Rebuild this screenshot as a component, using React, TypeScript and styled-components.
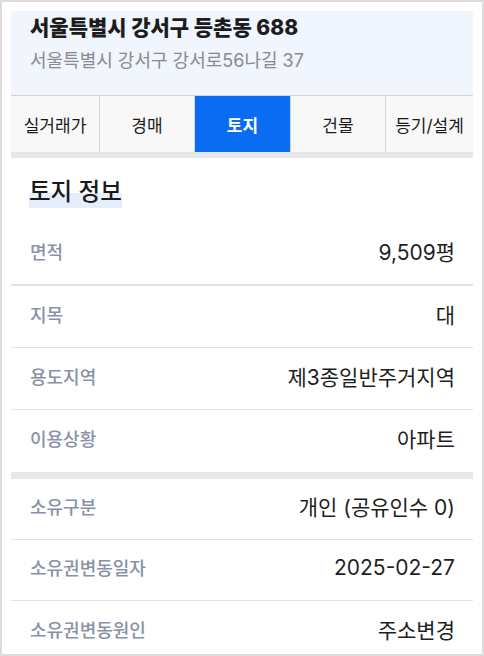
import styled, { createGlobalStyle } from "styled-components";

const GlobalStyle = createGlobalStyle`
  * {
    box-sizing: border-box;
  }
  html, body {
    margin: 0;
    padding: 0;
    background: #ffffff;
  }
  body {
    font-family: "Inter", "Noto Sans CJK KR", "Noto Sans", sans-serif;
    color: #222222;
  }
`;

const Frame = styled.div`
  width: 484px;
  height: 656px;
  border: 2px solid #dcdcdc;
  padding: 9px 9px 0 9px;
  overflow: hidden;
  background: #ffffff;
`;

const Card = styled.div`
  width: 462px;
  display: flex;
  flex-direction: column;
`;

const Header = styled.div`
  height: 84px;
  background: #f0f5fe;
  padding: 2px 19px 0 19px;
  display: flex;
  flex-direction: column;
`;

const Address = styled.h1`
  margin: 0;
  font-size: 21px;
  font-weight: 800;
  line-height: 30px;
  color: #1c1c1c;
`;

const RoadAddress = styled.p`
  margin: 5px 0 0;
  font-size: 18px;
  line-height: 26px;
  color: #8a8a8a;
`;

const Tabs = styled.nav`
  display: grid;
  grid-template-columns: 89px 95px 96px 95px 1fr;
  height: 57px;
  border-top: 1px solid #d4d4d4;
  background: #f8f8f8;
`;

const Tab = styled.div<{ active?: boolean }>`
  display: flex;
  align-items: center;
  justify-content: center;
  font-size: 17px;
  font-weight: ${(p) => (p.active ? 700 : 400)};
  color: ${(p) => (p.active ? "#ffffff" : "#1a1a1a")};
  background: ${(p) => (p.active ? "#0a6cf0" : "transparent")};
  border-right: 1px solid #d4d4d4;
  white-space: nowrap;

  &:last-child {
    border-right: none;
  }
`;

const Band = styled.div<{ size: number }>`
  height: ${(p) => p.size}px;
  background: #e5e8eb;
`;

const SectionHead = styled.div`
  height: 66px;
  padding: 18px 18px 0 18px;
`;

const SectionTitle = styled.h2`
  display: inline-block;
  margin: 0;
  font-size: 23.5px;
  font-weight: 500;
  line-height: 32px;
  color: #1a1a1a;
  background: linear-gradient(transparent 52%, #e6eefc 52%);
`;

const Row = styled.div<{ pitch: number; thick?: boolean }>`
  display: flex;
  align-items: center;
  justify-content: space-between;
  height: ${(p) => p.pitch}px;
  padding: 0 18px 6px 19px;
  border-bottom: ${(p) => (p.thick ? 2 : 1)}px solid #e3e3e3;

  &:last-child {
    border-bottom: none;
  }
`;

const Label = styled.span`
  font-size: 18px;
  font-weight: 500;
  color: #8891a8;
`;

const Value = styled.span`
  font-size: 21px;
  color: #1f1f1f;
`;

const landRows = [
  { label: "면적", value: "9,509평" },
  { label: "지목", value: "대" },
  { label: "용도지역", value: "제3종일반주거지역" },
  { label: "이용상황", value: "아파트" },
];

const ownerRows = [
  { label: "소유구분", value: "개인 (공유인수 0)" },
  { label: "소유권변동일자", value: "2025-02-27" },
  { label: "소유권변동원인", value: "주소변경" },
];

const tabs = ["실거래가", "경매", "토지", "건물", "등기/설계"];

function App() {
  return (
    <>
      <GlobalStyle />
      <Frame>
        <Card>
          <Header>
            <Address>서울특별시 강서구 등촌동 688</Address>
            <RoadAddress>서울특별시 강서구 강서로56나길 37</RoadAddress>
          </Header>
          <Tabs>
            {tabs.map((t) => (
              <Tab key={t} active={t === "토지"}>
                {t}
              </Tab>
            ))}
          </Tabs>
          <Band size={6} />
          <SectionHead>
            <SectionTitle>토지 정보</SectionTitle>
          </SectionHead>
          <div>
            {landRows.map((r, i) => (
              <Row key={r.label} pitch={62} thick={i === 0}>
                <Label>{r.label}</Label>
                <Value>{r.value}</Value>
              </Row>
            ))}
          </div>
          <Band size={7} />
          <div>
            {ownerRows.map((r) => (
              <Row key={r.label} pitch={61}>
                <Label>{r.label}</Label>
                <Value>{r.value}</Value>
              </Row>
            ))}
          </div>
        </Card>
      </Frame>
    </>
  );
}

export default App;
